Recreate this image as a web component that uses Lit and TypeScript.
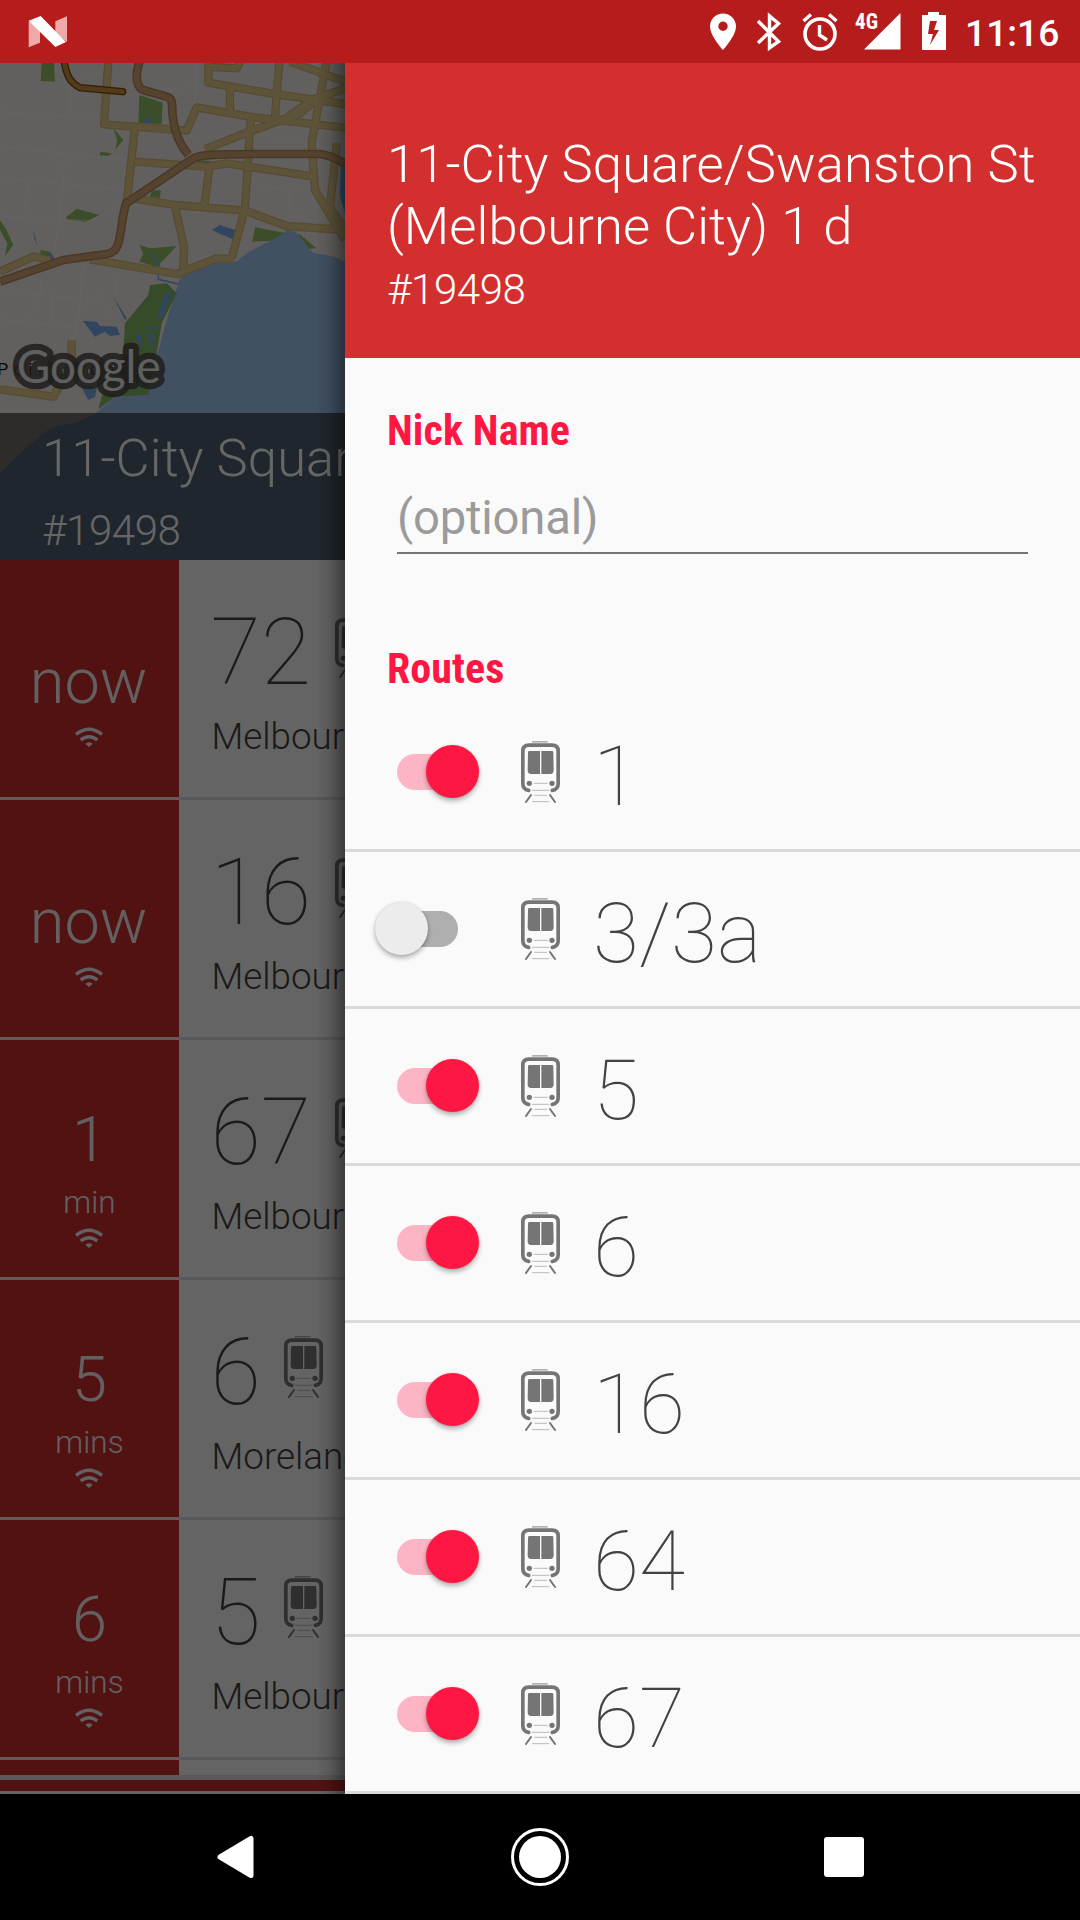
import { LitElement, html, svg, css } from "lit";
import { customElement, property } from "lit/decorators.js";
import { classMap } from "lit/directives/class-map.js";

const ROUTES = [
  { name: "1", on: true },
  { name: "3/3a", on: false },
  { name: "5", on: true },
  { name: "6", on: true },
  { name: "16", on: true },
  { name: "64", on: true },
  { name: "67", on: true },
];

const DEPARTURES = [
  { time: "now", unit: "", route: "72", dest: "Melbourne University" },
  { time: "now", unit: "", route: "16", dest: "Melbourne University" },
  { time: "1", unit: "min", route: "67", dest: "Melbourne University" },
  { time: "5", unit: "mins", route: "6", dest: "Moreland" },
  { time: "6", unit: "mins", route: "5", dest: "Melbourne University" },
];

@customElement("train-icon")
class TrainIcon extends LitElement {
  static styles = css`
    :host { display: block; width: 39px; height: 62px; flex: none; }
    svg { display: block; }
  `;
  render() {
    return html`<svg width="39" height="62" viewBox="0 0 117 186">
      <g fill="#757575">
        <path d="M33 0H80V5H33Z" opacity=".55" />
        <path d="M24 30H57V99H30Q20 99 20 88L21 36Q21 30 24 30ZM61 30H94Q97 30 97 36L98 88Q98 99 88 99H61Z" />
        <circle cx="25" cy="127" r="8" />
        <circle cx="93" cy="127" r="8" />
      </g>
      <path d="M23 148C12 146 5.500 139 5.500 128V30C5.500 18 12 12.500 24 12.500H93C105 12.500 111.500 18 111.500 30V128C111.500 139 105 146 94 148" fill="none" stroke="#757575" stroke-width="11" stroke-linecap="round" />
      <path d="M30 162 15 183M87 162 102 183" fill="none" stroke="#757575" stroke-width="6" stroke-linecap="round" />
      <path d="M38 127H80M33 148H85M40 163H78M33 182H85" fill="none" stroke="#9a9a9a" stroke-width="2" />
    </svg>`;
  }
}

@customElement("route-switch")
class RouteSwitch extends LitElement {
  @property({ type: Boolean }) on = false;
  static styles = css`
    :host { display: block; width: 104px; height: 54px; flex: none; }
    .box { display: flex; align-items: center; width: 104px; height: 54px; position: relative; }
    .track { width: 61px; height: 36px; margin-left: 22px; border-radius: 18px; background: #afafaf; }
    .thumb { position: absolute; left: 0; top: 0; width: 53px; height: 53px; border-radius: 50%; background: #ececec; box-shadow: 0 3px 5px rgba(0, 0, 0, 0.3), 0 0 2px rgba(0, 0, 0, 0.12); }
    .on .track { background: #fdb4c4; }
    .on .thumb { left: 51px; background: #ff1744; }
  `;
  render() {
    return html`<div class=${classMap({ box: true, on: this.on })}>
      <div class="track"></div><div class="thumb"></div>
    </div>`;
  }
}

@customElement("stop-map")
class StopMap extends LitElement {
  static styles = css`
    :host { display: block; }
    svg { display: block; }
    .label { font: 400 52px Roboto, sans-serif; fill: #111; }
    .brand { font: 400 142px Lato, Roboto, sans-serif; fill: #f0f0f0; stroke: rgba(80, 78, 76, 0.88); stroke-width: 38px; stroke-linejoin: round; paint-order: stroke; }
  `;
  render() {
    const minor = svg`<path d="M0 335 300 357M0 440 390 480M0 535 180 550 380 570M0 648 200 660 270 663 370 610M210 190V360M195 460 180 655 160 770M85 540 75 640M250 790 235 950 220 1030M0 870 120 885 235 895M0 960 90 965 230 985M120 800 125 880 80 960M160 885 150 975M340 800 350 900M430 270 550 265 590 240M585 190V320M590 410 610 440M775 400 940 430M780 560 900 570M870 570V620L970 690M975 690V750M240 230 300 215M940 220V290M250 920 295 880 340 960" />`;
    const yellow = svg`<path d="M325 185 312 373 560 392 590 322 760 352 1035 383M405 380 380 610M625 185V248L810 280 1035 312M690 262V335M838 185 825 350M980 185 935 425 945 570 1035 720M615 448 740 398 900 340 960 290M752 355 735 625 695 775M405 485 620 500 680 490 940 530M628 505 612 625M400 595 525 615 735 632 860 678 1035 690M525 620 552 740 550 805M270 778 530 822 650 775 700 778M870 185 1035 245M620 200 710 205 720 185M1010 430 990 620 1035 690M0 815 100 770 150 780M215 1020V1090L160 1190 0 1168M865 350 935 300 1035 265" />`;
    const orange = svg`<path d="M420 180C400 235 415 265 430 270L500 290C525 297 512 325 520 360 525 410 545 440 565 465M0 845 190 780 320 762C370 755 355 690 378 610L580 475C610 460 680 465 740 462H960C990 466 1010 475 1035 492" />`;
    return html`<svg width="345" height="497" viewBox="0 189 1035 1491">
      <rect y="189" width="1035" height="1491" fill="#f3efeb" />
      <g fill="#93c468">
        <path d="M125 189H162L165 245 122 243Z" />
        <path d="M418 285 488 308 485 372 415 368Z" />
        <path d="M200 650 230 626 298 645 255 667 198 658Z" />
        <path d="M418 735 450 745 530 738 500 770 470 800 418 785 430 760Z" />
        <path d="M455 572 482 570 480 595 450 590Z" />
        <path d="M765 682 860 700 820 722 757 725Z" />
        <path d="M340 385 370 420 345 450 352 422Z" />
        <path d="M300 455 335 460 325 468 300 466Z" />
        <path d="M590 480 630 483 625 497 600 494Z" />
        <path d="M0 660 20 690 40 735 15 768 22 730 0 690Z" />
        <path d="M120 750 150 755 162 770 125 772Z" />
        <path d="M895 700 950 745 905 748Z" />
      </g>
      <g fill="#7ab0ea">
        <path d="M635 690 660 675 705 690 700 718 655 700Z" />
        <path d="M248 962 290 965 300 978 350 980 360 1005 330 1008 315 995 285 1010Z" />
        <path d="M340 890 380 955 375 960Z" />
        <path d="M430 360 455 352 458 370 430 370Z" />
        <path d="M100 690 112 738 102 715Z" />
        <path d="M125 765 155 762 165 778 140 785Z" />
        <path d="M240 1155 290 1165 285 1190 265 1200Z" />
        <path d="M1022 490H1035V640L1020 590Z" />
      </g>
      <path d="M540 835C570 810 640 780 710 785 760 735 840 720 860 690 900 685 910 740 945 760 980 765 1010 770 1035 785V1680H0V1420L60 1360 130 1300C170 1265 215 1280 240 1262L282 1243 345 1192 440 1180C460 1150 465 1100 470 1070L500 960Z" fill="#a4cbf4" />
      <path d="M450 855 500 850 530 880 485 970 470 1060 445 1184 345 1190 295 1228 305 1190 370 1060 375 970 445 885Z" fill="#88bb62" />
      <path d="M495 880 518 875 488 950 470 958ZM405 1020 418 990 430 1040ZM445 1000 462 1000 458 1040Z" fill="#7ab0ea" />
      <path d="M435 985H475M440 1000 465 1050M455 760 480 800M475 820V838L535 852" fill="none" stroke="#7ab0ea" stroke-width="5" />
      <g fill="none" stroke="#fff" stroke-opacity=".4" stroke-width="6">${minor}</g>
      <g fill="none" stroke="#d8ba78" stroke-width="25" stroke-linejoin="round">${yellow}</g>
      <g fill="none" stroke="#e8cf8c" stroke-width="18" stroke-linejoin="round">${yellow}</g>
      <g fill="none" stroke="#bb8a5e" stroke-width="26" stroke-linejoin="round">${orange}</g>
      <g fill="none" stroke="#d6a876" stroke-width="17" stroke-linejoin="round">${orange}</g>
      <path d="M192 180C200 235 215 250 240 263L368 275" fill="none" stroke="#7c4d12" stroke-width="22" stroke-linecap="round" />
      <path d="M192 180C200 235 215 250 240 263L368 275" fill="none" stroke="#d09543" stroke-width="14" stroke-linecap="round" />
      <text class="label" x="-8" y="1124" textLength="394">Point Cook</text>
      <text class="brand" x="50" y="1149" textLength="432" lengthAdjust="spacingAndGlyphs">Google</text>
    </svg>`;
  }
}

@customElement("app-root")
class AppRoot extends LitElement {
  static styles = css`
    :host { display: block; font-family: Roboto, sans-serif; }
    * { box-sizing: border-box; }
    svg { display: block; flex: none; }
    .screen { display: flex; flex-direction: column; width: 1080px; height: 1920px; overflow: hidden; background: #000; }
    .status { display: flex; align-items: center; height: 63px; padding: 0 22px 0 28px; background: #b71c1c; color: #fff; }
    .status .spacer { flex: 1; }
    .clock { font-size: 37.2px; font-weight: 500; line-height: 44px; width: 93px; margin-left: 8px; padding-top: 2px; white-space: nowrap; }
    .cell { font: 700 21.5px/22px "Roboto Condensed", Roboto, sans-serif; }
    .main { display: flex; height: 1731px; }
    .behind { position: relative; width: 345px; overflow: hidden; background: #fafafa; }
    .scrim { position: absolute; inset: 0; background: linear-gradient(90deg, rgba(0,0,0,0) 316px, rgba(0,0,0,.12) 330px, rgba(0,0,0,.4) 345px), rgba(0, 0, 0, 0.6); }
    .hero { position: relative; height: 497px; }
    .caption { position: absolute; left: 0; right: 0; top: 350px; height: 147px; padding: 14px 0 0 42px; background: rgba(30, 30, 30, 0.62); color: #fff; white-space: nowrap; font-weight: 300; overflow: hidden; }
    .name { font-size: 52.5px; line-height: 62px; letter-spacing: 0.09px; }
    .code { font-size: 42px; line-height: 50px; letter-spacing: -0.4px; }
    .caption .code { margin-top: 17px; }
    .dep { display: flex; height: 240px; }
    .when { width: 179px; display: flex; flex-direction: column; align-items: center; background: #cf2e2e; color: #f4f0f0; border-bottom: 3px solid #f0e4de; font-weight: 300; padding: 85px 2px 0 0; flex: none; }
    .when.mins { padding: 63px 0 0; }
    .when .t { font-size: 63px; line-height: 74px; }
    .when .u { font-size: 31.5px; line-height: 37px; margin-top: 7px; }
    .when svg { margin-top: 8px; }
    .when.mins svg { margin: 7px 2px 0 0; }
    .what { flex: none; width: 901px; border-bottom: 3px solid #dcdcdc; padding: 39px 0 0 32.5px; color: #424242; white-space: nowrap; }
    .line { display: flex; height: 108px; }
    .num { font-size: 92px; font-weight: 100; line-height: 108px; margin-left: -1px; }
    .line train-icon { margin: 17px 0 0 23.5px; }
    .dest { font-size: 36.75px; font-weight: 300; line-height: 43px; margin-top: 8px; }
    .peek { display: flex; height: 15px; }
    .peek .red { width: 179px; background: #cf2e2e; }
    .gap { height: 5px; background: #e4dedb; }
    .bar { height: 11px; background: #cf2e2e; }
    .drawer { width: 735px; background: #fafafa; display: flex; flex-direction: column; }
    .head { height: 295px; padding: 70px 0 0 42px; background: #d32f2f; color: #fff; font-weight: 300; white-space: nowrap; }
    .head .code { margin-top: 8px; }
    .title { font-family: "Roboto Condensed", Roboto, sans-serif; font-size: 42px; font-weight: 700; font-stretch: 75%; line-height: 50px; letter-spacing: 0.1px; color: #ff1744; margin: 48px 0 0 42px; }
    .title.routes { margin-top: 90px; margin-bottom: 1px; }
    .field { margin: 34px 52px 0 52px; height: 64px; border-bottom: 2px solid #757575; font-size: 47.25px; line-height: 56px; letter-spacing: -0.2px; color: #9b9b9b; }
    .route { display: flex; align-items: center; height: 157px; border-bottom: 3px solid #dadada; padding-left: 30px; }
    .route train-icon { margin: -1px 0 0 42px; }
    .route .rn { font-size: 84px; font-weight: 100; line-height: 98px; margin-left: 33px; padding-top: 9px; color: #424242; }
    .nav { display: flex; justify-content: space-between; height: 126px; padding: 0 216px; align-items: center; }
  `;

  wifi() {
    return html`<svg width="28" height="20" viewBox="0 0 84 60"><g fill="none" stroke="#f4f0f0" stroke-width="10"><path d="M3 22Q42-9 81 22" /><path d="M17 39Q42 19 67 39" /></g><path d="M31 50Q42 41 53 50L42 60Z" fill="#f4f0f0" /></svg>`;
  }

  statusIcons() {
    return html`<svg width="257" height="63" viewBox="700 0 257 63" fill="#fff">
      <path d="M723 13.500C715.800 13.500 710 19.300 710 26.500 710 36 723 50 723 50S736 36 736 26.500C736 19.300 730.200 13.500 723 13.500ZM723 31A4.700 4.700 0 1 1 723 21.600 4.700 4.700 0 0 1 723 31Z" fill-rule="evenodd" />
      <path d="M758 21 778.500 41.500 769.500 48V16L778.500 23.500 758 43" fill="none" stroke="#fff" stroke-width="3.400" />
      <circle cx="820" cy="34" r="15" fill="none" stroke="#fff" stroke-width="3.600" />
      <path d="M819.500 25V35L827 40M803.500 21 811 14.500M829 14.500 836.500 21" fill="none" stroke="#fff" stroke-width="3.400" />
      <path d="M864 49.500 900.500 13V49.500Z" />
      <path d="M922 15H928V12H939V15H946V50H922ZM930 21 928 34H933L930 45 939 30H934L937 21Z" fill-rule="evenodd" />
      <text class="cell" x="855" y="29" textLength="23" lengthAdjust="spacingAndGlyphs">4G</text>
    </svg>`;
  }

  render() {
    return html`<div class="screen">
      <div class="status">
        <svg width="40" height="32" viewBox="0 0 120 96">
          <path d="M2 16 36 34V80L2 94Z" fill="#f0a9a9" /><path d="M82 16 117 1V78L82 50Z" fill="#f0a9a9" />
          <path d="M2 14 38 0 114 78 82 93Z" fill="#fff" />
        </svg>
        <div class="spacer"></div>
        ${this.statusIcons()}
        <div class="clock">11:16</div>
      </div>
      <div class="main">
        <div class="behind">
          <div class="hero">
            <stop-map></stop-map>
            <div class="caption"><div class="name">11-City Square/Swanston St</div><div class="code">#19498</div></div>
          </div>
          ${DEPARTURES.map((d) => html`<div class="dep">
            <div class=${classMap({ when: true, mins: !!d.unit })}>
              <div class="t">${d.time}</div>
              ${d.unit ? html`<div class="u">${d.unit}</div>` : ""}
              ${this.wifi()}
            </div>
            <div class="what">
              <div class="line"><div class="num">${d.route}</div><train-icon></train-icon></div>
              <div class="dest">${d.dest}</div>
            </div>
          </div>`)}
          <div class="peek"><div class="red"></div></div>
          <div class="gap"></div>
          <div class="bar"></div>
          <div class="scrim"></div>
        </div>
        <div class="drawer">
          <div class="head">
            <div class="name">11-City Square/Swanston St<br />(Melbourne City) 1 d</div>
            <div class="code">#19498</div>
          </div>
          <div class="title">Nick Name</div>
          <div class="field">(optional)</div>
          <div class="title routes">Routes</div>
          ${ROUTES.map((r) => html`<div class="route">
            <route-switch ?on=${r.on}></route-switch>
            <train-icon></train-icon>
            <div class="rn">${r.name}</div>
          </div>`)}
        </div>
      </div>
      <div class="nav">
        <svg width="40" height="44" viewBox="0 0 40 44"><path d="M35 3.500V40.500L4 22Z" fill="#fff" stroke="#fff" stroke-width="5" stroke-linejoin="round" /></svg>
        <svg width="58" height="58" viewBox="0 0 58 58"><circle cx="29" cy="29" r="27.500" fill="none" stroke="#fff" stroke-width="3" /><circle cx="29" cy="29" r="21" fill="#fff" /></svg>
        <svg width="40" height="40" viewBox="0 0 40 40"><rect width="40" height="40" rx="3" fill="#fff" /></svg>
      </div>
    </div>`;
  }
}
